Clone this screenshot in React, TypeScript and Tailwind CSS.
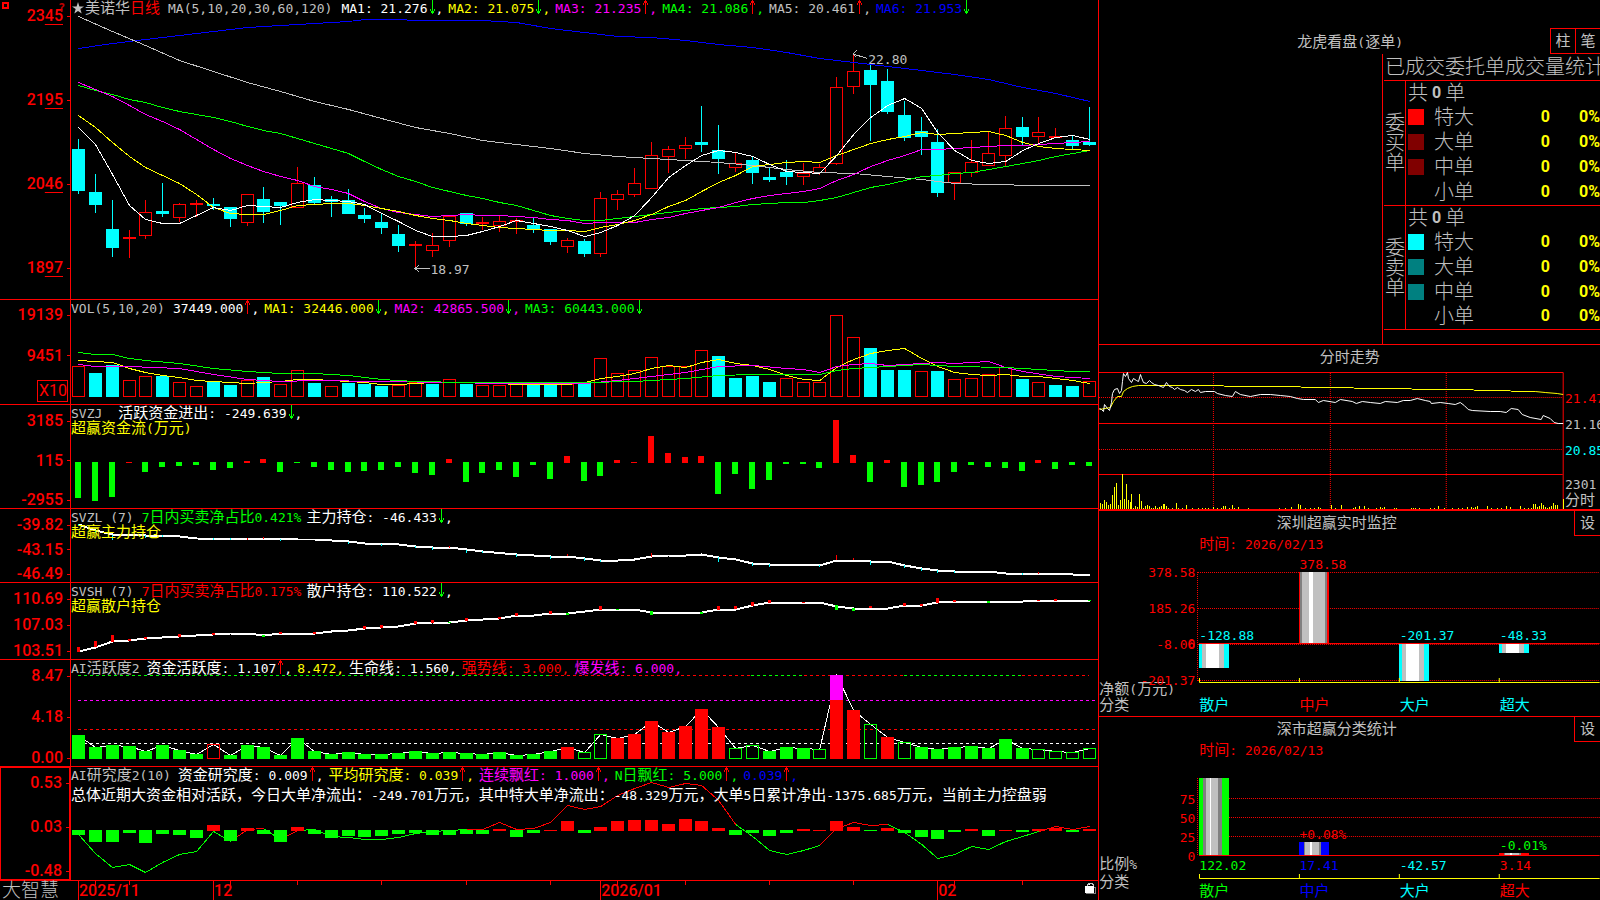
import type { ReactNode } from "react";
import { clsx } from "clsx";

const RED = "#ff0000";
const CYAN = "#00ffff";
const GREEN = "#00ff00";
const YELLOW = "#ffff00";
const MAGENTA = "#ff00ff";
const BLUE = "#0000ff";
const GRAY = "#c0c0c0";
const WHITE = "#ffffff";

// x of the i-th trading day
const dayX = (i: number) => Math.round(78 + 16.85 * i);

type Pt = [number, number];
const daily = (ys: number[]): Pt[] => ys.map((y, i) => [dayX(i), y]);
const sparse = (pts: Pt[]): Pt[] => pts.map(([i, y]) => [dayX(i), y]);

// [kind, high, body top, body bottom, low], kind: c = falling, r = rising
type Candle = ["c" | "r", number, number, number, number];
const candles: Candle[] = [
  ["c", 139, 149, 191, 194], ["c", 174, 192, 205, 213], ["c", 200, 229, 248, 257], ["r", 230, 237, 239, 258],
  ["r", 200, 212, 236, 239], ["c", 183, 211, 214, 217], ["r", 203, 204, 218, 222], ["r", 200, 203, 205, 217],
  ["c", 198, 204, 206, 210], ["c", 207, 207, 219, 227], ["r", 194, 194, 223, 226], ["c", 187, 199, 212, 223],
  ["c", 202, 202, 206, 225], ["r", 167, 183, 208, 208], ["c", 177, 185, 203, 204], ["c", 196, 199, 202, 217],
  ["c", 189, 200, 214, 214], ["c", 208, 215, 219, 223], ["c", 213, 222, 228, 234], ["c", 225, 234, 246, 252],
  ["r", 241, 244, 246, 268], ["r", 233, 245, 251, 257], ["r", 216, 216, 241, 247], ["c", 213, 213, 224, 226],
  ["r", 217, 222, 224, 230], ["r", 216, 221, 226, 232], ["r", 218, 220, 222, 234], ["c", 218, 225, 229, 233],
  ["c", 229, 229, 242, 245], ["r", 238, 240, 247, 253], ["c", 239, 241, 254, 257], ["r", 192, 198, 254, 257],
  ["r", 190, 194, 200, 210], ["r", 168, 183, 195, 197], ["r", 142, 155, 189, 189], ["r", 146, 149, 157, 173],
  ["r", 137, 145, 149, 159], ["c", 106, 142, 145, 152], ["c", 125, 150, 159, 174], ["r", 153, 163, 168, 172],
  ["c", 157, 160, 173, 184], ["c", 168, 177, 180, 182], ["c", 160, 172, 177, 185], ["r", 163, 173, 177, 185],
  ["r", 164, 167, 173, 175], ["r", 77, 87, 164, 165], ["r", 53, 71, 87, 94], ["c", 63, 70, 85, 141],
  ["c", 69, 81, 112, 114], ["c", 101, 115, 138, 141], ["c", 117, 131, 137, 155], ["c", 129, 142, 193, 197],
  ["r", 172, 172, 183, 200], ["r", 140, 162, 173, 177], ["r", 132, 153, 166, 166], ["r", 116, 128, 156, 166],
  ["c", 117, 127, 137, 145], ["r", 117, 132, 137, 143], ["r", 128, 136, 138, 138], ["c", 135, 140, 146, 149],
  ["c", 107, 142, 145, 146],
];

const ma5 = [127, 144, 174, 205, 219, 223, 223, 215, 207, 210, 205, 206, 207, 202, 199, 200, 201, 204, 213, 221, 230, 236, 236, 235, 231, 226, 220, 223, 226, 230, 236, 232, 225, 215, 197, 177, 165, 155, 150, 152, 156, 164, 171, 172, 173, 155, 134, 117, 105, 98, 108, 132, 150, 160, 163, 161, 150, 143, 137, 135, 139];
const ma10 = [115, 127, 142, 156, 167, 175, 183, 194, 207, 213, 214, 214, 210, 205, 204, 203, 203, 205, 208, 211, 215, 218, 220, 223, 225, 227, 228, 229, 230, 230, 231, 227, 224, 220, 214, 206, 200, 191, 182, 175, 166, 164, 162, 161, 162, 155, 149, 143, 139, 136, 132, 134, 133, 132, 131, 135, 142, 146, 148, 149, 150];
const ma20 = [82, 89, 96, 105, 114, 121, 129, 139, 149, 158, 165, 171, 176, 180, 186, 189, 193, 201, 208, 212, 214, 216, 215, 214, 215, 215, 216, 217, 219, 220, 223, 222, 222, 222, 219, 217, 213, 210, 207, 202, 198, 195, 193, 191, 188, 180, 174, 166, 160, 155, 149, 149, 148, 147, 146, 145, 145, 144, 143, 142, 141];
const ma30 = [85, 90, 94, 99, 102, 107, 111, 114, 117, 121, 126, 130, 133, 138, 143, 148, 153, 161, 169, 176, 181, 187, 191, 195, 198, 202, 205, 210, 215, 218, 220, 220, 218, 216, 214, 212, 210, 208, 207, 206, 204, 203, 202, 202, 200, 197, 192, 187, 184, 180, 176, 175, 173, 172, 169, 166, 163, 160, 156, 153, 150];
const ma60: Pt[] = [[0, 16], [2, 31], [4, 45], [6, 60], [8, 71], [10, 82], [12, 91], [14, 101], [16, 109], [18, 118], [20, 127], [22, 133], [24, 140], [26, 144], [28, 148], [30, 153], [32, 156], [34, 158], [36, 160], [38, 162], [40, 165], [42, 169], [44, 172], [46, 173], [48, 176], [50, 179], [52, 183], [54, 184], [57, 185], [60, 185]];
const ma120: Pt[] = [[0, 48], [2, 43], [4, 39], [6, 35], [8, 31], [10, 27], [12, 25], [14, 23], [16, 21], [17, 19], [19, 19], [20, 20], [24, 20], [26, 22], [28, 28], [30, 32], [32, 36], [34, 37], [36, 40], [38, 44], [40, 47], [42, 52], [44, 58], [46, 62], [48, 66], [50, 70], [52, 74], [54, 79], [56, 87], [58, 93], [60, 101]];

const volKinds = "rccrrcrrccrcrrcrcccrrcrcrrrccrcrrrrrrrccccrrrrrcccrcrrrrcrccr".split("");
const volTops = [366, 373, 365, 380, 376, 376, 382, 386, 381, 385, 380, 377, 384, 370, 383, 386, 383, 384, 386, 385, 382, 384, 379, 384, 385, 385, 384, 385, 385, 384, 383, 358, 373, 370, 357, 366, 366, 350, 356, 378, 376, 382, 378, 382, 382, 315, 337, 348, 370, 370, 371, 371, 379, 378, 374, 367, 379, 382, 385, 386, 381];
const volMa1 = [360, 361, 362, 368, 372, 375, 377, 380, 381, 382, 383, 382, 381, 379, 379, 380, 381, 382, 384, 384, 383, 382, 382, 382, 383, 383, 384, 384, 384, 384, 382, 378, 376, 373, 368, 365, 367, 362, 359, 363, 365, 369, 375, 379, 380, 367, 359, 353, 350, 348, 358, 366, 372, 374, 375, 374, 376, 376, 378, 380, 383];
const volMa2: Pt[] = [[0, 364], [1, 366], [3, 366], [6, 368], [8, 374], [10, 379], [12, 381], [14, 380], [18, 381], [22, 382], [25, 383], [28, 383], [30, 383], [32, 380], [34, 376], [36, 372], [38, 366], [40, 365], [42, 368], [43, 369], [44, 372], [45, 366], [46, 364], [47, 363], [48, 365], [50, 363], [51, 362], [52, 363], [54, 361], [55, 367], [56, 371], [58, 376], [60, 378]];
const volMa3: Pt[] = [[0, 352], [1, 354], [2, 354], [3, 358], [4, 360], [6, 363], [8, 368], [10, 371], [12, 373], [14, 373], [16, 375], [18, 379], [20, 381], [23, 382], [28, 382], [30, 382], [33, 381], [36, 378], [38, 375], [40, 374], [44, 374], [45, 370], [46, 368], [48, 366], [50, 364], [52, 366], [55, 367], [57, 369], [59, 371], [60, 371]];

const flow = [498, 501, 497, 462, 472, 467, 466, 465, 470, 468, 461, 459, 472, 463, 467, 470, 472, 471, 470, 467, 473, 475, 459, 482, 473, 470, 477, 465, 479, 456, 481, 476, 460, 462, 436, 453, 457, 456, 494, 474, 489, 480, 464, 464, 468, 420, 455, 482, 460, 487, 485, 482, 472, 465, 467, 468, 471, 460, 469, 465, 466];

const mainHold: Pt[] = [[0, 524], [1, 530], [2, 534], [4, 535], [6, 536], [7, 538], [13, 539], [14, 539], [15, 540], [16, 541], [17, 543], [19, 544], [20, 546], [21, 547], [22, 547], [23, 549], [24, 551], [26, 554], [28, 556], [29, 556], [30, 558], [31, 560], [32, 560], [33, 559], [34, 556], [35, 555], [36, 555], [37, 554], [38, 557], [39, 559], [40, 563], [41, 564], [43, 564], [44, 565], [45, 560], [46, 560], [47, 561], [48, 561], [49, 565], [50, 568], [51, 570], [52, 571], [54, 571], [55, 573], [58, 573], [59, 574], [60, 574]];
// [day, from, to, colour]
type Tick = [number, number, number, string];
const mainTicks: Tick[] = [
  [0, 524, 526, CYAN], [1, 530, 533, CYAN], [2, 535, 540, CYAN], [4, 535, 538, CYAN], [5, 535, 537, CYAN], [8, 538, 540, CYAN],
  [9, 538, 540, CYAN], [10, 538, 540, RED], [11, 537, 539, RED], [12, 539, 541, CYAN], [16, 542, 544, CYAN], [18, 544, 546, CYAN],
  [20, 546, 548, CYAN], [21, 547, 550, CYAN], [22, 546, 548, RED], [23, 550, 553, CYAN], [24, 551, 553, CYAN], [26, 554, 557, CYAN],
  [28, 556, 559, CYAN], [29, 554, 556, RED], [30, 558, 561, CYAN], [31, 560, 562, CYAN], [34, 553, 557, RED], [38, 557, 562, CYAN],
  [40, 563, 566, CYAN], [41, 564, 567, CYAN], [44, 565, 567, CYAN], [45, 555, 560, RED], [46, 558, 560, RED], [47, 561, 565, CYAN],
  [49, 565, 568, CYAN], [50, 568, 571, CYAN], [51, 570, 573, CYAN], [52, 571, 573, CYAN], [56, 573, 575, CYAN], [57, 572, 574, RED],
];
const retailHold: Pt[] = [[0, 651], [1, 647], [2, 641], [3, 640], [4, 638], [6, 636], [7, 635], [9, 633], [10, 633], [11, 635], [12, 633], [14, 633], [15, 631], [16, 630], [17, 628], [18, 627], [19, 626], [20, 623], [21, 622], [22, 622], [23, 620], [25, 618], [26, 615], [27, 615], [28, 613], [29, 613], [30, 611], [31, 609], [33, 609], [34, 612], [37, 612], [38, 609], [39, 609], [40, 605], [41, 602], [44, 602], [45, 606], [46, 608], [48, 608], [49, 605], [50, 605], [51, 602], [52, 601], [56, 601], [57, 600], [60, 600]];
const retailTicks: Tick[] = [
  [0, 647, 652, RED], [1, 641, 647, RED], [2, 635, 642, RED], [3, 639, 641, RED], [4, 637, 639, RED], [6, 634, 637, RED],
  [8, 633, 635, RED], [11, 635, 637, GREEN], [12, 632, 634, RED], [14, 632, 634, RED], [17, 626, 629, RED], [18, 625, 628, RED],
  [20, 621, 624, RED], [21, 620, 623, RED], [22, 622, 623, GREEN], [23, 618, 621, RED], [25, 617, 619, RED], [26, 613, 616, RED],
  [28, 611, 614, RED], [29, 613, 615, GREEN], [31, 606, 610, RED], [32, 609, 610, GREEN], [34, 611, 615, GREEN], [37, 612, 614, GREEN],
  [38, 606, 610, RED], [39, 606, 609, RED], [40, 602, 606, RED], [41, 600, 603, RED], [43, 602, 603, RED], [45, 605, 610, GREEN],
  [46, 608, 611, GREEN], [47, 606, 608, RED], [49, 603, 606, RED], [50, 604, 606, RED], [51, 598, 603, RED], [52, 600, 602, RED],
  [54, 601, 603, GREEN], [57, 600, 601, RED], [58, 599, 601, RED], [60, 600, 601, GREEN],
];

// g/r solid, G/R outlined
const activeKinds = "ggggggggRggggggggggggggggggggrGGrrrrrrrGGgggGrrGrGgggggggGGGG".split("");
const activeTops = [735, 747, 745, 746, 751, 745, 750, 754, 744, 755, 745, 747, 755, 738, 751, 754, 752, 754, 754, 753, 751, 753, 752, 753, 754, 752, 755, 754, 751, 747, 752, 734, 738, 734, 721, 732, 726, 709, 727, 748, 745, 751, 747, 748, 749, 675, 710, 724, 737, 742, 747, 749, 747, 746, 748, 739, 748, 749, 751, 752, 748];

const study = [835, 842, 842, 833, 843, 834, 835, 838, 825, 841, 828, 834, 842, 827, 834, 838, 836, 837, 836, 834, 833, 835, 835, 834, 834, 829, 837, 833, 830, 821, 833, 827, 821, 820, 820, 824, 819, 821, 828, 835, 833, 836, 833, 829, 830, 821, 827, 831, 828, 833, 837, 839, 832, 829, 836, 830, 832, 829, 828, 832, 829];
const studyLine = [834, 853, 867, 864, 872, 862, 854, 851, 831, 841, 829, 828, 839, 830, 829, 836, 837, 839, 839, 837, 833, 831, 830, 829, 829, 822, 829, 828, 822, 805, 809, 806, 795, 788, 782, 787, 783, 785, 800, 824, 836, 850, 854, 850, 845, 828, 822, 825, 824, 832, 844, 858, 854, 846, 849, 841, 836, 831, 826, 829, 826];
const studySegments: [number, number, string][] = [
  [0, 9, GREEN], [9, 11, RED], [11, 12, GREEN], [12, 13, RED], [13, 23, GREEN], [23, 39, RED], [39, 44, GREEN], [44, 48, RED], [48, 57, GREEN], [57, 60, RED],
];

const intradayAvg: Pt[] = [[1099, 409], [1110, 407], [1113, 401], [1117, 396], [1121, 396], [1123, 391], [1127, 388], [1132, 386], [1138, 385], [1223, 385], [1224, 386], [1300, 386], [1301, 387], [1353, 387], [1354, 388], [1411, 388], [1412, 389], [1473, 389], [1474, 390], [1510, 390], [1511, 391], [1535, 391], [1545, 392], [1557, 393], [1563, 394]];
const intradayPrice: Pt[] = [[1099, 408], [1101, 409], [1103, 411], [1104, 404], [1107, 408], [1109, 410], [1111, 402], [1112, 393], [1114, 389], [1117, 388], [1119, 393], [1121, 390], [1122, 381], [1123, 373], [1125, 376], [1127, 372], [1128, 378], [1131, 382], [1133, 378], [1136, 380], [1138, 381], [1140, 374], [1141, 377], [1143, 382], [1146, 383], [1149, 380], [1151, 382], [1154, 384], [1158, 385], [1163, 387], [1166, 382], [1169, 386], [1172, 387], [1174, 389], [1177, 387], [1180, 389], [1184, 390], [1187, 392], [1191, 389], [1195, 391], [1198, 389], [1200, 392], [1205, 391], [1214, 391], [1217, 393], [1225, 395], [1232, 396], [1235, 391], [1240, 394], [1250, 396], [1260, 394], [1270, 394], [1280, 395], [1290, 396], [1297, 398], [1303, 399], [1315, 399], [1318, 402], [1323, 400], [1335, 402], [1340, 399], [1352, 401], [1356, 403], [1362, 401], [1370, 402], [1380, 403], [1385, 401], [1397, 402], [1403, 400], [1410, 400], [1417, 398], [1425, 400], [1430, 401], [1431, 403], [1440, 402], [1448, 403], [1455, 404], [1460, 402], [1464, 405], [1468, 409], [1472, 410], [1490, 411], [1500, 411], [1506, 412], [1511, 408], [1518, 409], [1522, 414], [1530, 417], [1541, 419], [1543, 415], [1550, 418], [1554, 422], [1558, 423], [1563, 423]];
const intradayVol: Pt[] = [[1100, 6], [1102, 5], [1104, 9], [1106, 7], [1108, 4], [1110, 5], [1112, 14], [1114, 22], [1116, 26], [1118, 4], [1120, 9], [1122, 35], [1124, 10], [1126, 25], [1128, 9], [1130, 7], [1131, 15], [1133, 1], [1135, 3], [1137, 2], [1139, 15], [1141, 8], [1143, 1], [1145, 3], [1147, 4], [1149, 3], [1151, 1], [1153, 1], [1155, 3], [1157, 1], [1159, 2], [1161, 3], [1163, 5], [1164, 5], [1166, 3], [1168, 1], [1172, 1], [1176, 6], [1178, 1], [1182, 1], [1186, 4], [1192, 1], [1198, 1], [1202, 1], [1205, 1], [1208, 1], [1213, 2], [1217, 1], [1221, 1], [1223, 3], [1225, 3], [1229, 1], [1232, 4], [1234, 1], [1238, 2], [1248, 1], [1279, 1], [1285, 1], [1291, 2], [1298, 5], [1300, 4], [1305, 1], [1310, 1], [1314, 1], [1318, 2], [1320, 1], [1331, 4], [1335, 1], [1341, 4], [1353, 1], [1355, 2], [1359, 3], [1364, 3], [1368, 1], [1376, 1], [1380, 2], [1382, 1], [1384, 2], [1394, 1], [1396, 1], [1411, 1], [1413, 1], [1415, 1], [1419, 1], [1430, 1], [1434, 1], [1438, 3], [1444, 1], [1452, 1], [1458, 1], [1462, 1], [1467, 2], [1471, 2], [1473, 1], [1475, 2], [1477, 3], [1487, 3], [1491, 1], [1497, 1], [1501, 1], [1506, 3], [1510, 2], [1520, 3], [1524, 1], [1528, 1], [1531, 1], [1533, 5], [1535, 5], [1537, 2], [1539, 3], [1541, 6], [1543, 4], [1545, 2], [1547, 1], [1549, 2], [1551, 3], [1553, 6], [1555, 4], [1557, 4], [1563, 10]];

/* Chinese runs keep the 15px size, everything else goes to the narrower mono face */
function T({ children, className }: { children: string; className?: string }) {
  const parts = children.split(/([\u2e80-\u9fff\uff00-\uffef]+)/).filter(Boolean);
  return (
    <span className={clsx("whitespace-pre", className)}>
      {parts.map((part, i) =>
        /[\u2e80-\u9fff\uff00-\uffef]/.test(part) ? (
          part
        ) : (
          <span key={i} className="text-[13px] leading-none">{part}</span>
        )
      )}
    </span>
  );
}

function Arrow({ up, color }: { up?: boolean; color?: string }) {
  const stroke = color ?? (up ? RED : GREEN);
  return (
    <svg viewBox="0 0 8 14" className="h-[14px] w-2 shrink-0" shapeRendering="crispEdges" fill={stroke}>
      {up ? <path d="M4 0h1v14h-1zM3 1h3v2h-3zM2 3h1v2h-1zM6 3h1v2h-1z" /> : <path d="M4 0h1v14h-1zM3 11h3v2h-3zM2 9h1v2h-1zM6 9h1v2h-1z" />}
    </svg>
  );
}

function Reading({ text, dir, className, tail = "," }: { text: string; dir?: "up" | "down"; className: string; tail?: string }) {
  return (
    <span className={clsx("mr-[5px] flex shrink-0", className)}>
      <T>{text}</T>
      {dir && <Arrow up={dir === "up"} />}
      <T>{tail}</T>
    </span>
  );
}

const Line = ({ pts, color, width = 1 }: { pts: Pt[]; color: string; width?: number }) => (
  <polyline points={pts.map(([x, y]) => `${x + 0.5},${y + 0.5}`).join(" ")} fill="none" stroke={color} strokeWidth={width} />
);

const Bar = ({ x, y, h, w = 13, color, hollow }: { x: number; y: number; h: number; w?: number; color: string; hollow?: boolean }) =>
  hollow ? (
    <rect x={x + 0.5} y={y + 0.5} width={w - 1} height={Math.max(h - 1, 0)} fill="none" stroke={color} />
  ) : (
    <rect x={x} y={y} width={w} height={h} fill={color} />
  );

function Plot({ box, className, children }: { box: string; className: string; children: ReactNode }) {
  return (
    <svg viewBox={box} preserveAspectRatio="none" shapeRendering="crispEdges" className={clsx("col-start-1 row-start-1 w-full", className)}>
      {children}
    </svg>
  );
}

function AxisLabel({ children, underline }: { children: string; underline?: boolean }) {
  return (
    <div className="flex h-4 items-center justify-end gap-1">
      <span className="text-base leading-4 font-medium [font-family:Roboto,sans-serif]">
        {underline ? (
          <>
            {children.slice(0, 2)}
            <span className="underline decoration-1 underline-offset-3">{children.slice(2)}</span>
          </>
        ) : (
          children
        )}
      </span>
      <span className="h-px w-[3px] bg-[#ff0000]" />
    </div>
  );
}

function Panel({ axis, header, axisClass, children, note }: { axis: ReactNode; header: ReactNode; axisClass: string; children: ReactNode; note?: string }) {
  return (
    <section className="flex border-b border-[#ff0000]">
      <div className={clsx("flex w-[70px] shrink-0 flex-col justify-between text-[#ff0000]", axisClass)}>{axis}</div>
      <div className="relative grid min-w-0 flex-1 content-start overflow-hidden border-l border-[#ff0000]">
        {children}
        <div className="z-10 col-start-1 row-start-1 overflow-hidden">
          <div className="flex h-[15px] items-center leading-4 text-[#c0c0c0]">{header}</div>
          {note && <T className="block h-4 leading-4 text-[#ffff00]">{note}</T>}
        </div>
      </div>
    </section>
  );
}

function CandlePanel() {
  return (
    <Panel
      axisClass="pt-2 pb-[23px]"
      axis={["2345", "2195", "2046", "1897"].map((v) => <AxisLabel key={v} underline>{v}</AxisLabel>)}
      header={
        <>
          <svg viewBox="0 0 12 12" className="mx-px size-3" fill={GRAY}>
            <path d="M6 0l1.4 4.4H12L8.3 7.100l1.400 4.500L6 8.900 2.300 11.600l1.400-4.500L0 4.400h4.600z" />
          </svg>
          <T>美诺华</T>
          <T className="mr-2 text-[#ff0000]">日线</T>
          <T className="mr-[9px]">MA(5,10,20,30,60,120)</T>
          <Reading text="MA1: 21.276" dir="down" className="text-white" />
          <Reading text="MA2: 21.075" dir="down" className="text-[#ffff00]" />
          <Reading text="MA3: 21.235" dir="up" className="text-[#ff00ff]" />
          <Reading text="MA4: 21.086" dir="up" className="text-[#00ff00]" />
          <Reading text="MA5: 20.461" dir="up" className="text-[#c0c0c0]" />
          <Reading text="MA6: 21.953" dir="down" className="text-[#0000ff]" tail="" />
        </>
      }
    >
      <Plot box="71 0 1027 299" className="h-[299px]">
        {candles.map(([kind, high, top, bottom, low], i) => {
          const color = kind === "c" ? CYAN : RED;
          const x = dayX(i);
          return (
            <g key={i}>
              <rect x={x} y={high} width={1} height={top - high} fill={color} />
              <rect x={x} y={bottom} width={1} height={low - bottom} fill={color} />
              <Bar x={x - 6} y={top} h={bottom - top} color={color} hollow={kind === "r" && bottom - top > 2} />
            </g>
          );
        })}
        <Line pts={sparse(ma120)} color={BLUE} />
        <Line pts={sparse(ma60)} color={GRAY} />
        <Line pts={daily(ma30)} color={GREEN} />
        <Line pts={daily(ma20)} color={MAGENTA} />
        <Line pts={daily(ma10)} color={YELLOW} />
        <Line pts={daily(ma5)} color={WHITE} />
        <path d="M415 268.500h15M419 265l-4 3.500 4 3.500M853 54l14 4.500M857 50l-4 4 3 3" stroke={GRAY} fill="none" />
      </Plot>
      {/* extreme price marks */}
      <T className="absolute top-[261px] left-[35%] leading-4 text-[#c0c0c0]">18.97</T>
      <T className="absolute top-[51px] left-[77.6%] leading-4 text-[#c0c0c0]">22.80</T>
    </Panel>
  );
}

function VolumePanel() {
  return (
    <Panel
      axisClass="pt-[7px]"
      axis={
        <>
          <AxisLabel>19139</AxisLabel>
          <AxisLabel>9451</AxisLabel>
          <div className="flex h-4 items-end justify-end pr-[2px] pb-[2px]">
            <span className="flex h-[22px] w-[31px] shrink-0 items-center border border-[#ff0000] pl-px text-base leading-4 [font-family:Roboto,sans-serif]">X10</span>
          </div>
        </>
      }
      header={
        <>
          <T className="mr-2">VOL(5,10,20)</T>
          <Reading text="37449.000" dir="up" className="text-white" />
          <Reading text="MA1: 32446.000" dir="down" className="text-[#ffff00]" />
          <Reading text="MA2: 42865.500" dir="down" className="text-[#ff00ff]" />
          <Reading text="MA3: 60443.000" dir="down" className="text-[#00ff00]" tail="" />
        </>
      }
    >
      <Plot box="71 300 1027 104" className="h-[104px]">
        {volTops.map((y, i) => (
          <Bar key={i} x={dayX(i) - 6} y={y} h={397 - y} color={volKinds[i] === "c" ? CYAN : RED} hollow={volKinds[i] === "r"} />
        ))}
        <Line pts={daily(volMa1)} color={YELLOW} />
        <Line pts={sparse(volMa2)} color={MAGENTA} />
        <Line pts={sparse(volMa3)} color={GREEN} />
      </Plot>
    </Panel>
  );
}

function FlowPanel() {
  return (
    <Panel
      axisClass="pt-2"
      axis={["3185", "115", "-2955"].map((v) => <AxisLabel key={v}>{v}</AxisLabel>)}
      note="超赢资金流(万元)"
      header={
        <>
          <T className="mr-4">SVZJ</T>
          <Reading text="活跃资金进出: -249.639" dir="down" className="text-white" />
        </>
      }
    >
      <Plot box="71 405 1027 103" className="h-[103px]">
        {flow.map((y, i) =>
          y <= 462 ? (
            <Bar key={i} x={dayX(i) - 3} y={y} w={6} h={463 - y} color={RED} />
          ) : (
            <Bar key={i} x={dayX(i) - 3} y={462} w={6} h={y - 462} color={GREEN} />
          )
        )}
      </Plot>
    </Panel>
  );
}

function HoldingPanels() {
  return (
    <>
      <Panel
        axisClass="pt-2"
        axis={["-39.82", "-43.15", "-46.49"].map((v) => <AxisLabel key={v}>{v}</AxisLabel>)}
        note="超赢主力持仓"
        header={
          <>
            <T className="mr-2">SVZL (7)</T>
            <T className="mr-[5px] text-[#00ff00]">7日内买卖净占比0.421%</T>
            <Reading text="主力持仓: -46.433" dir="down" className="text-white" />
          </>
        }
      >
        <Plot box="71 509 1027 73" className="h-[73px]">
          <Line pts={sparse(mainHold)} color={WHITE} width={2} />
          {mainTicks.map(([i, from, to, color]) => (
            <rect key={i} x={dayX(i)} y={from} width={1} height={to - from} fill={color} />
          ))}
        </Plot>
      </Panel>
      <Panel
        axisClass="pt-2"
        axis={["110.69", "107.03", "103.51"].map((v) => <AxisLabel key={v}>{v}</AxisLabel>)}
        note="超赢散户持仓"
        header={
          <>
            <T className="mr-2">SVSH (7)</T>
            <T className="mr-[5px] text-[#ff0000]">7日内买卖净占比0.175%</T>
            <Reading text="散户持仓: 110.522" dir="down" className="text-white" />
          </>
        }
      >
        <Plot box="71 583 1027 76" className="h-[76px]">
          <Line pts={sparse(retailHold)} color={WHITE} width={2} />
          {retailTicks.map(([i, from, to, color]) => (
            <rect key={i} x={dayX(i) - 1} y={from} width={3} height={to - from} fill={color} />
          ))}
        </Plot>
      </Panel>
    </>
  );
}

const dashes: [number, number, number, string][] = [
  [78, 549, 675, GREEN], [549, 751, 675, RED], [751, 804, 675, GREEN], [804, 904, 675, RED], [904, 1022, 675, GREEN], [1022, 1089, 675, RED],
  [78, 1096, 700, MAGENTA], [78, 1096, 729, RED], [78, 1096, 743, WHITE],
];

function ActivityPanel() {
  return (
    <Panel
      axisClass="pt-2"
      axis={["8.47", "4.18", "0.00"].map((v) => <AxisLabel key={v}>{v}</AxisLabel>)}
      header={
        <>
          <T className="mr-[7px]">AI活跃度2</T>
          <Reading text="资金活跃度: 1.107" dir="up" className="text-white" />
          <Reading text="8.472" className="text-[#ffff00]" />
          <Reading text="生命线: 1.560" className="text-white" />
          <Reading text="强势线: 3.000" className="text-[#ff0000]" />
          <Reading text="爆发线: 6.000" className="text-[#ff00ff]" />
        </>
      }
    >
      <Plot box="71 660 1027 106" className="h-[106px]">
        {dashes.map(([x1, x2, y, color], i) => (
          <path key={i} d={`M${x1} ${y + 0.5}H${x2}`} stroke={color} strokeDasharray="3 3" />
        ))}
        <Line pts={daily(activeTops)} color={WHITE} />
        {activeTops.map((y, i) => (
          <Bar key={i} x={dayX(i) - 6} y={y} h={759 - y} color={/g/i.test(activeKinds[i]) ? GREEN : RED} hollow={/[GR]/.test(activeKinds[i])} />
        ))}
        <Bar x={dayX(45) - 6} y={675} h={25} color={MAGENTA} />
      </Plot>
    </Panel>
  );
}

function StudyPanel() {
  return (
    <Panel
      axisClass="border border-[#ff0000] pt-[7px]"
      axis={["0.53", "0.03", "-0.48"].map((v) => <AxisLabel key={v}>{v}</AxisLabel>)}
      header={
        <>
          <T className="mr-[7px]">AI研究度2(10)</T>
          <Reading text="资金研究度: 0.009" dir="up" className="text-white" />
          <Reading text="平均研究度: 0.039" dir="up" className="text-[#ffff00]" />
          <Reading text="连续飘红: 1.000" dir="up" className="text-[#ff00ff]" />
          <Reading text="N日飘红: 5.000" dir="up" className="text-[#00ff00]" />
          <Reading text="0.039" dir="up" className="text-[#0000ff]" />
        </>
      }
    >
      <Plot box="71 767 1027 113" className="h-[113px]">
        {studySegments.map(([from, to, color]) => (
          <Line key={from} pts={daily(studyLine).slice(from, to + 1)} color={color} />
        ))}
        {study.map((y, i) =>
          y <= 830 ? (
            <Bar key={i} x={dayX(i) - 6} y={y} h={831 - y} color={RED} />
          ) : (
            <Bar key={i} x={dayX(i) - 6} y={830} h={y - 830} color={GREEN} />
          )
        )}
      </Plot>
      <T className="z-10 col-start-1 row-start-1 mt-5 h-4 leading-4 text-white">
        总体近期大资金相对活跃，今日大单净流出：-249.701万元，其中特大单净流出：-48.329万元，大单5日累计净出-1375.685万元，当前主力控盘弱
      </T>
    </Panel>
  );
}

function Timeline() {
  return (
    <footer className="flex h-[19px]">
      <div className="w-[71px] shrink-0 pl-[2px] text-[19px] leading-[18px] font-light whitespace-nowrap text-[#c0c0c0]">大智慧</div>
      <div className="grid min-w-0 flex-1">
        <Plot box="71 881 1027 19" className="h-[19px]">
          {[0, 8, 31, 51].map((i) => <rect key={i} x={dayX(i)} y={881} width={1} height={19} fill={RED} />)}
          {[1, 3, 9, 13, 18, 23, 28, 32, 36, 41, 46, 52, 56].map((i) => <rect key={i} x={dayX(i)} y={881} width={1} height={4} fill={RED} />)}
        </Plot>
        <div className="col-start-1 row-start-1 grid grid-cols-[8fr_135fr_387fr_337fr_147fr_13fr] text-base leading-[19px] font-medium text-[#ff0000] [font-family:Roboto,sans-serif]">
          <span className="col-start-2">2025/11</span>
          <span>12</span>
          <span>2026/01</span>
          <span>02</span>
          <svg viewBox="0 0 11 12" className="mt-px h-3 w-[11px]" shapeRendering="crispEdges">
            <path d="M2 4V2h1V1h4v1h1v2" stroke={GRAY} fill="none" />
            <rect x="0" y="4" width="9" height="7" fill={WHITE} />
            <path d="M9 5h1v6H1v1h9V5" fill="#808080" stroke="#808080" />
            <rect x="4" y="2" width="1" height="1" fill={WHITE} />
          </svg>
        </div>
      </div>
    </footer>
  );
}

const orderGroups = [
  { side: "委买单", colors: ["bg-[#ff0000]", "bg-[#800000]", "bg-[#800000]", "bg-black"] },
  { side: "委卖单", colors: ["bg-[#00ffff]", "bg-[#008080]", "bg-[#008080]", "bg-black"] },
];
const sizes = ["特大", "大单", "中单", "小单"];

function OrderPanel() {
  return (
    <section className="relative h-[345px] overflow-hidden border-b border-[#ff0000] text-[#c0c0c0]">
      <header className="flex h-[54px] items-end">
        <h2 className="flex-1 pb-1 pl-[51px] text-center leading-4">
          <T>龙虎看盘(逐单)</T>
        </h2>
        <div className="flex h-[26px] w-[50px] border border-r-0 border-[#ff0000]">
          <button className="w-[25px] border-r border-[#ff0000] leading-6">柱</button>
          <button className="w-[24px] leading-6">笔</button>
        </div>
      </header>
      <div className="flex h-[291px] justify-end">
        <div className="w-[218px] border-l border-[#ff0000] pl-px text-[20px] font-light">
          <h3 className="h-[26px] pl-px leading-[26px] whitespace-nowrap">已成交委托单成交量统计</h3>
          <table className="w-full table-fixed border-separate border-spacing-0 leading-4">
            <colgroup>
              <col className="w-[21px]" />
              <col className="w-[24px]" />
              <col className="w-[66px]" />
              <col />
              <col className="w-[50px]" />
            </colgroup>
            {orderGroups.map(({ side, colors }) => (
              <tbody key={side} className="[&:last-child_tr:last-child_td]:border-b [&:last-child_tr:first-child_th]:border-b">
                <tr className="h-[25px]">
                  <th rowSpan={5} className="border-t border-[#ff0000] p-0 pl-px text-left leading-5 font-light break-all">{side}</th>
                  <td colSpan={4} className="border-t border-l border-[#ff0000] p-0 pl-[2px]">
                    <span className="flex items-center gap-[4px]">
                      共<b className="text-base leading-4 font-bold [font-family:Roboto,sans-serif]">0</b>单
                    </span>
                  </td>
                </tr>
                {sizes.map((size, i) => (
                  <tr key={size} className="h-[25px]">
                    <td className="border-l border-[#ff0000] p-0 pb-[2px] pl-[2px]"><div className={clsx("size-4", colors[i])} /></td>
                    <td className="border-[#ff0000] p-0 pb-[2px] pl-[5px] whitespace-nowrap">{size}</td>
                    <td className="border-[#ff0000] p-0 pb-[2px] text-right text-base leading-4 font-bold text-[#ffff00] [font-family:Roboto,sans-serif]">0</td>
                    <td className="border-[#ff0000] p-0 pb-[2px] text-right text-base leading-4 font-bold text-[#ffff00] [font-family:Roboto,sans-serif]">0%</td>
                  </tr>
                ))}
              </tbody>
            ))}
          </table>
        </div>
      </div>
    </section>
  );
}

function IntradayPanel() {
  return (
    <section className="border-b-2 border-[#ff0000]">
      <h2 className="h-[27px] pt-1 text-center leading-4 text-[#c0c0c0]">分时走势</h2>
      <div className="flex h-[137px]">
        <div className="grid min-w-0 flex-1">
          <Plot box="1099 372 465 137" className="h-[137px]">
            <path d="M1099 372.500H1563.500V509M1099 423.500H1563M1099 474.500H1563" stroke={RED} fill="none" />
            <path d="M1099 397.500H1563M1099 449.500H1563M1213.500 373V509M1330.500 373V509M1446.500 373V509" stroke={RED} strokeDasharray="1 1" fill="none" />
            {intradayVol.map(([x, h]) => <rect key={x} x={x} y={509 - h} width={1} height={h} fill={YELLOW} />)}
            <Line pts={intradayAvg} color={YELLOW} />
            <Line pts={intradayPrice} color={WHITE} />
          </Plot>
        </div>
        <div className="flex w-[36px] flex-col overflow-hidden pt-[18px] pl-px leading-4 text-[#c0c0c0]">
          <T className="mb-[10px] text-[#ff0000]">21.47</T>
          <T className="mb-[10px]">21.16</T>
          <T className="mb-[18px] text-[#00ffff]">20.85</T>
          <T>2301</T>
          <T>分时</T>
        </div>
      </div>
    </section>
  );
}

function StatsHeader({ title }: { title: string }) {
  return (
    <>
      <header className="flex h-[25px]">
        <h2 className="flex-1 pt-1 text-center leading-4 text-[#c0c0c0]">{title}</h2>
        <button className="w-[26px] border-b border-l border-[#ff0000] text-center leading-6 text-[#c0c0c0]">设</button>
      </header>
      <T className="block h-4 pl-[100px] leading-4 text-[#ff0000]">时间: 2026/02/13</T>
    </>
  );
}

/* vertical stripes of one 30px wide 3D-looking column */
function Column3D({ x, y, h, stripes }: { x: number; y: number; h: number; stripes: [number, string][] }) {
  let left = x;
  return (
    <>
      {stripes.map(([w, color], i) => {
        const rect = <rect key={i} x={left} y={y} width={w} height={h} fill={color} />;
        left += w;
        return rect;
      })}
    </>
  );
}

const cyanStripes: [number, string][] = [[3, CYAN], [4, GRAY], [13, WHITE], [5, GRAY], [5, CYAN]];
const redStripes: [number, string][] = [[1, RED], [2, "#808080"], [7, GRAY], [4, WHITE], [12, GRAY], [2, "#808080"], [2, RED]];
const greenStripes: [number, string][] = [[4, GREEN], [3, "#808080"], [4, GRAY], [1, WHITE], [7, GRAY], [4, "#808080"], [7, GREEN]];
const blueStripes: [number, string][] = [[5, BLUE], [1, "#808080"], [5, GRAY], [2, WHITE], [7, GRAY], [2, "#808080"], [8, BLUE]];
const thinRedStripes: [number, string][] = [[5, RED], [1, "#808080"], [5, GRAY], [2, WHITE], [7, GRAY], [2, "#808080"], [8, RED]];

function MonitorPanel() {
  return (
    <section className="border-b border-[#ff0000]">
      <StatsHeader title="深圳超赢实时监控" />
      <div className="flex h-[132px]">
        <div className="relative flex h-[136px] w-[98px] shrink-0 flex-col justify-between pt-[12px] pr-[2px] text-right leading-4 text-[#ff0000]">
          <T>378.58</T>
          <T>185.26</T>
          <T>-8.06</T>
          <T>-201.37</T>
          <T className="absolute top-[83px] right-[2px]">0</T>
        </div>
        <div className="grid min-w-0 flex-1 grid-rows-[132px]">
          <Plot box="1197 552 403 132" className="h-[132px]">
            <path d="M1197.500 572V681M1198 572.500H1600M1198 608.500H1600M1198 644.500H1600M1198 680.500H1600" stroke={RED} strokeDasharray="1 1" />
            <path d="M1199 643.500H1600" stroke={RED} />
            <Column3D x={1199} y={644} h={24} stripes={cyanStripes} />
            <Column3D x={1299} y={572} h={71} stripes={redStripes} />
            <Column3D x={1399} y={644} h={37} stripes={cyanStripes} />
            <Column3D x={1499} y={644} h={9} stripes={cyanStripes} />
            <path d="M1199.500 678V682.500H1600M1299.500 678V682M1399.500 678V682M1499.500 678V682" stroke={YELLOW} fill="none" />
          </Plot>
          <div className="z-10 col-start-1 row-start-1 grid grid-cols-4 pl-[2px] leading-4 text-[#00ffff]">
            <T className="mt-[75px]">-128.88</T>
            <T className="mt-1 text-[#ff0000]">378.58</T>
            <T className="mt-[75px]">-201.37</T>
            <T className="mt-[75px]">-48.33</T>
          </div>
        </div>
      </div>
      <div className="flex h-8 leading-4">
        <div className="-mt-[3px] w-[98px] shrink-0 whitespace-nowrap text-[#c0c0c0]">
          <T className="block">净额(万元)</T>
          分类
        </div>
        <div className="grid flex-1 grid-cols-4 pt-[13px] pl-[2px] text-[#00ffff]">
          <span>散户</span>
          <span className="text-[#ff0000]">中户</span>
          <span>大户</span>
          <span>超大</span>
        </div>
      </div>
    </section>
  );
}

function CategoryPanel() {
  return (
    <section>
      <StatsHeader title="深市超赢分类统计" />
      <div className="flex h-[125px]">
        <div className="flex w-[98px] shrink-0 flex-col text-[#ff0000]">
          <div className="flex flex-col gap-[3px] pt-[33px] pr-[2px] text-right leading-4">
            <T>75</T>
            <T>50</T>
            <T>25</T>
            <T>0</T>
          </div>
          <T className="-mt-2 leading-4 text-[#c0c0c0]">比例%</T>
          <span className="mt-[2px] leading-4 text-[#c0c0c0]">分类</span>
        </div>
        <div className="grid min-w-0 flex-1 grid-rows-[125px]">
          <Plot box="1197 758 403 125" className="h-[125px]">
            <path d="M1197.500 778V855M1229 798.500H1600M1229 817.500H1600M1229 836.500H1600" stroke={RED} strokeDasharray="1 1" />
            <Column3D x={1199} y={778} h={77} stripes={greenStripes} />
            <Column3D x={1299} y={842} h={13} stripes={blueStripes} />
            <Column3D x={1499} y={853} h={2} stripes={thinRedStripes} />
            <path d="M1199 855.500H1600" stroke={RED} />
            <path d="M1199.500 874V878.500H1600M1299.500 874V878M1399.500 874V878M1499.500 874V878" stroke={YELLOW} fill="none" />
          </Plot>
          <div className="z-10 col-start-1 row-start-1 grid grid-cols-4 content-end pb-[10px] pl-[2px] leading-4">
            <T className="col-start-2 self-start text-[#ff0000]">+0.08%</T>
            <T className="col-start-4 mt-[11px] mb-1 text-[#00ff00]">-0.01%</T>
            <T className="text-[#00ff00]">122.02</T>
            <T className="text-[#0000ff]">17.41</T>
            <T className="text-[#00ffff]">-42.57</T>
            <T className="text-[#ff0000]">3.14</T>
          </div>
        </div>
      </div>
      <div className="grid h-[17px] grid-cols-4 pl-[100px] leading-4">
        <span className="text-[#00ff00]">散户</span>
        <span className="text-[#0000ff]">中户</span>
        <span className="text-[#00ffff]">大户</span>
        <span className="text-[#ff0000]">超大</span>
      </div>
    </section>
  );
}

export default function App() {
  return (
    <main className="flex min-h-screen overflow-hidden bg-black text-[15px] text-white [font-family:DejaVu_Sans_Mono,Noto_Sans_CJK_SC,monospace]">
      <div className="relative min-w-0 flex-[1099] border-r border-[#ff0000]">
        <CandlePanel />
        <VolumePanel />
        <FlowPanel />
        <HoldingPanels />
        <ActivityPanel />
        <StudyPanel />
        <Timeline />
        <span className="absolute top-[2px] left-[2px] size-[7px] border-2 border-[#ff0000]" />
        <span className="absolute top-0 left-[58px] text-xs leading-4 font-bold text-[#c00000]">?</span>
      </div>
      <aside className="min-w-0 flex-[501]">
        <OrderPanel />
        <IntradayPanel />
        <MonitorPanel />
        <CategoryPanel />
      </aside>
    </main>
  );
}
